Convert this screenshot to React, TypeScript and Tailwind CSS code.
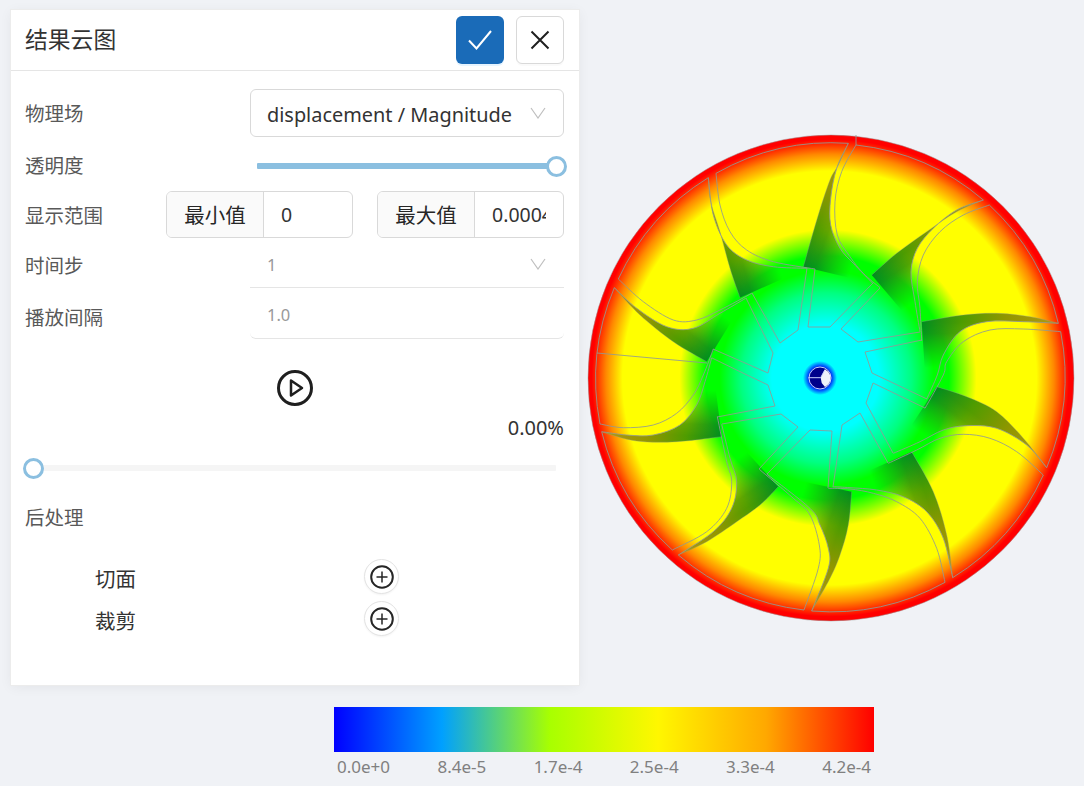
import React from "react";

type P = [number, number];
const OFF: Record<number, P> = { 1: [580, 125], 2: [830, 125], 3: [580, 375], 4: [830, 375] };
const q = (n: number, pts: P[]): P[] => pts.map(([x, y]) => [OFF[n][0] + x / 3, OFF[n][1] + y / 3]);

const curve = (pts: P[], move = true) => {
  let d = move ? `M${pts[0][0].toFixed(1)} ${pts[0][1].toFixed(1)}` : `L${pts[0][0].toFixed(1)} ${pts[0][1].toFixed(1)}`;
  for (let i = 0; i < pts.length - 1; i++) {
    const p0 = pts[Math.max(0, i - 1)], p1 = pts[i], p2 = pts[i + 1], p3 = pts[Math.min(pts.length - 1, i + 2)];
    const c1: P = [p1[0] + (p2[0] - p0[0]) / 6, p1[1] + (p2[1] - p0[1]) / 6];
    const c2: P = [p2[0] - (p3[0] - p1[0]) / 6, p2[1] - (p3[1] - p1[1]) / 6];
    d += `C${c1[0].toFixed(1)} ${c1[1].toFixed(1)} ${c2[0].toFixed(1)} ${c2[1].toFixed(1)} ${p2[0].toFixed(1)} ${p2[1].toFixed(1)}`;
  }
  return d;
};
const line = (pts: P[]) => "M" + pts.map((p) => `${p[0].toFixed(1)} ${p[1].toFixed(1)}`).join("L");

const blades: { lead: P[]; c1: P[]; c2: P[] }[] = [
  {
    lead: q(1, [[385, 158], [392, 230], [420, 320], [450, 430], [480, 518]]),
    c1: q(1, [[385, 158], [400, 270], [440, 360], [500, 405], [580, 425], [680, 430]]),
    c2: q(1, [[408, 145], [420, 240], [450, 320], [500, 375], [580, 410], [705, 432]]),
  },
  {
    lead: q(2, [[55, 55], [25, 120], [0, 165], [-35, 270], [-80, 425]]),
    c1: q(2, [[55, 55], [20, 130], [2, 220], [2, 300], [30, 370], [70, 415], [128, 475]]),
    c2: q(2, [[78, 60], [35, 140], [15, 230], [22, 330], [60, 395], [100, 445], [150, 488]]),
  },
  {
    lead: q(2, [[460, 225], [380, 260], [290, 320], [200, 385], [125, 450]]),
    c1: q(2, [[460, 225], [380, 255], [310, 310], [262, 370], [243, 440], [255, 530], [270, 620]]),
    c2: q(2, [[478, 240], [400, 270], [330, 320], [280, 390], [262, 470], [270, 550], [275, 647]]),
  },
  {
    lead: q(2, [[685, 595], [600, 575], [500, 565], [400, 570], [275, 590]]),
    c1: q(2, [[685, 595], [580, 590], [470, 590], [390, 620], [340, 690], [322, 750], [290, 822]]),
    c2: q(2, [[692, 620], [580, 612], [480, 615], [400, 650], [350, 710], [340, 750], [285, 850]]),
  },
  {
    lead: q(4, [[650, 278], [580, 190], [500, 110], [410, 65], [320, 35]]),
    c1: q(4, [[650, 278], [590, 210], [500, 160], [410, 152], [340, 165], [270, 200], [190, 235]]),
    c2: q(4, [[640, 300], [560, 230], [480, 190], [400, 178], [330, 190], [260, 225], [175, 265]]),
  },
  {
    lead: q(4, [[368, 608], [350, 480], [310, 350], [245, 230]]),
    c1: q(4, [[368, 608], [340, 490], [290, 410], [220, 365], [140, 345], [60, 338], [10, 335]]),
    c2: q(4, [[345, 622], [320, 520], [270, 430], [200, 380], [130, 355], [60, 342], [-5, 340]]),
  },
  {
    lead: q(4, [[-55, 708], [0, 610], [30, 540], [55, 450], [65, 350]]),
    c1: q(3, [[695, 708], [745, 580], [745, 520], [720, 450], [690, 400], [560, 297]]),
    c2: q(3, [[672, 705], [715, 580], [718, 510], [690, 420], [640, 370], [538, 283]]),
  },
  {
    lead: q(3, [[295, 540], [380, 500], [470, 440], [540, 390], [595, 335]]),
    c1: q(3, [[295, 540], [400, 470], [455, 400], [470, 320], [450, 250], [425, 148]]),
    c2: q(3, [[277, 525], [380, 470], [440, 400], [455, 320], [440, 260], [412, 125]]),
  },
  {
    lead: q(3, [[68, 172], [170, 198], [290, 200], [425, 185]]),
    c1: q(3, [[65, 170], [140, 180], [220, 180], [300, 150], [350, 90], [375, 20], [395, -52]]),
    c2: q(3, [[60, 147], [130, 158], [220, 150], [290, 115], [340, 60], [370, 0], [400, -78]]),
  },
  {
    lead: q(1, [[103, 488], [180, 570], [280, 650], [380, 710]]),
    c1: q(1, [[103, 488], [170, 550], [260, 605], [340, 610], [420, 565], [497, 520]]),
    c2: q(1, [[115, 462], [190, 530], [280, 585], [350, 585], [420, 555], [515, 505]]),
  },
];

const chains: P[][] = [
  [[746, 298], [773, 353], [768, 373], [713, 349]],
  [[712, 358], [747, 375], [768, 385], [775, 406], [717, 417]],
  [[722, 424], [781, 414], [798, 427], [759, 469]],
  [[767, 474], [810, 430], [832, 431], [828, 488]],
  [[833, 487], [842, 425], [860, 413], [888, 463]],
  [[893, 453], [866, 403], [873, 383], [925, 408]],
  [[927, 399], [872, 373], [865, 352], [922, 340]],
  [[920, 332], [858, 342], [841, 329], [880, 288]],
  [[873, 283], [830, 327], [808, 327], [815, 269]],
  [[807, 268], [798, 330], [780, 343], [752, 293]],
];

// Unit normal of the root->tip chord, pointing to the side the blade's back curve lies on.
const normalOf = (b: { lead: P[]; c1: P[] }): P => {
  const root = b.lead[b.lead.length - 1], tip = b.lead[0];
  const vx = tip[0] - root[0], vy = tip[1] - root[1];
  const len = Math.hypot(vx, vy);
  let nx = -vy / len, ny = vx / len;
  const mid = b.c1[Math.floor(b.c1.length / 2)];
  if ((mid[0] - root[0]) * nx + (mid[1] - root[1]) * ny < 0) {
    nx = -nx;
    ny = -ny;
  }
  return [nx, ny];
};

const Wheel = () => {
  const grey = "#909a94";
  return (
    <svg viewBox="580 0 504 686" className="ml-[1px] h-[686px] w-[504px] shrink-0">
      <defs>
        <radialGradient id="disk" gradientUnits="userSpaceOnUse" cx="830.5" cy="378" r="243.5" fx="824" fy="378">
          <stop offset="0" stopColor="#00ffff" />
          <stop offset="0.22" stopColor="#00ffff" />
          <stop offset="0.35" stopColor="#00ff80" />
          <stop offset="0.44" stopColor="#00ff00" />
          <stop offset="0.5" stopColor="#00ff00" />
          <stop offset="0.61" stopColor="#ffff00" />
          <stop offset="0.85" stopColor="#ffff00" />
          <stop offset="0.92" stopColor="#ff8800" />
          <stop offset="0.98" stopColor="#ff0000" />
          <stop offset="1" stopColor="#ff0000" />
        </radialGradient>
        <radialGradient id="hub" gradientUnits="userSpaceOnUse" cx="820" cy="378" r="17">
          <stop offset="0.55" stopColor="#0000c8" />
          <stop offset="0.75" stopColor="#0060ff" />
          <stop offset="1" stopColor="#00ffff" />
        </radialGradient>
        {blades.map((b, i) => {
          const root = b.lead[b.lead.length - 1];
          const tip = b.lead[0];
          const n = normalOf(b);
          return (
            <React.Fragment key={i}>
              <linearGradient id={`along${i}`} gradientUnits="userSpaceOnUse" x1={root[0]} y1={root[1]} x2={tip[0]} y2={tip[1]}>
                <stop offset="0" stopColor="#008c20" />
                <stop offset="0.3" stopColor="#4f9c00" />
                <stop offset="0.62" stopColor="#929600" />
                <stop offset="1" stopColor="#b09a10" />
              </linearGradient>
              <linearGradient
                id={`across${i}`}
                gradientUnits="userSpaceOnUse"
                x1={root[0]}
                y1={root[1]}
                x2={root[0] + n[0] * 46}
                y2={root[1] + n[1] * 46}
              >
                <stop offset="0" stopColor="#fff" />
                <stop offset="0.25" stopColor="#e6e6e6" />
                <stop offset="1" stopColor="#000" />
              </linearGradient>
              <mask id={`mask${i}`} maskUnits="userSpaceOnUse" x="580" y="120" width="504" height="510">
                <rect x="580" y="120" width="504" height="510" fill={`url(#across${i})`} />
              </mask>
            </React.Fragment>
          );
        })}
      </defs>
      <circle cx="831" cy="378" r="243" fill="url(#disk)" stroke="#9a9a9a" strokeWidth="0.5" />
      {blades.map((b, i) => {
        const d = curve(b.lead) + curve([...b.c1].reverse(), false) + "Z";
        return <path key={i} d={d} fill={`url(#along${i})`} mask={`url(#mask${i})`} />;
      })}
      <g fill="none" stroke={grey} strokeWidth="1" strokeOpacity="0.85">
        {blades.map((b, i) => {
          const next = blades[(i + 1) % blades.length];
          const a = b.c2[0], z = next.c1[0];
          return (
            <React.Fragment key={i}>
              <path d={curve(b.c1)} />
              <path d={curve(b.c2)} />
              <path d={curve(b.lead)} strokeOpacity="0.35" />
              <path d={`M${a[0]} ${a[1]}A235 235 0 0 1 ${z[0]} ${z[1]}`} />
            </React.Fragment>
          );
        })}
        {chains.map((c, i) => (
          <path key={i} d={line(c)} />
        ))}
        <path d="M597 353L707 363" />
        <path d="M856 135L856 145" />
      </g>
      <circle cx="820" cy="378" r="17" fill="url(#hub)" />
      <circle cx="820" cy="378" r="11" fill="#00008b" stroke="#c8d0ff" strokeWidth="1" />
      <path d="M825 369.5Q831 373 830.5 378Q831 383 825 387L821.7 383L820.7 377.7Z" fill="#eef0fa" />
      <path d="M808.5 377.7H820.7L825 369.5" fill="none" stroke="#c8d0ff" strokeWidth="1" />
    </svg>
  );
};

const Chevron = () => (
  <svg width="16" height="12" viewBox="0 0 16 12" fill="none" stroke="#bfbfbf" strokeWidth="1.2">
    <path d="M1 1L8 11L15 1" />
  </svg>
);

const Slider = ({ value, track }: { value: boolean; track: string }) => (
  <div className={`relative h-[6px] rounded-[1px] ${track}`}>
    <div
      className={`absolute top-[-7.5px] h-[21px] w-[21px] rounded-full border-[3px] border-[#8bbfe0] bg-white ${
        value ? "right-[-10px]" : "left-[-10px]"
      }`}
    />
  </div>
);

const Label = ({ children, className = "pt-[2px]" }: { children: React.ReactNode; className?: string }) => (
  <span className={`block text-[19.5px] leading-none text-[#595959] ${className}`}>{children}</span>
);

const Range = ({ name, value }: { name: string; value: string }) => (
  <div className="flex h-[47px] w-[187px] overflow-hidden rounded-[6px] border border-[#d9d9d9]">
    <div className="flex w-[97px] shrink-0 items-center justify-center border-r border-[#d9d9d9] bg-[#fafafa] pt-[1px] text-[20.5px] text-[#262626]">
      {name}
    </div>
    <div className="flex-1 overflow-hidden whitespace-nowrap pl-[17px] pr-[17px] text-[19.5px] leading-[45px] text-[#333]">
      <div className="overflow-hidden">{value}</div>
    </div>
  </div>
);

const PlusBtn = () => (
  <div className="flex h-[35px] w-[35px] items-center justify-center rounded-full border border-[#e3e3e3] bg-white shadow-[0_1px_2px_rgba(0,0,0,0.05)]">
    <svg width="24" height="24" viewBox="0 0 24 24" fill="none" stroke="#262626">
      <circle cx="12" cy="12" r="10.8" strokeWidth="2" />
      <path d="M12 6.5V17.5M6.5 12H17.5" strokeWidth="1.5" />
    </svg>
  </div>
);

export default function App() {
  return (
    <div className="h-[786px] w-[1084px] overflow-hidden bg-[#f0f2f6] font-['Noto_Sans','Noto_Sans_CJK_SC',sans-serif]">
      <div className="flex items-start">
        <div className="ml-[11px] mt-[10px] h-[675px] w-[568px] shrink-0 bg-white shadow-[0_0_0_1px_#ececec,0_2px_12px_rgba(0,0,0,0.06)]">
          <div className="flex h-[61px] items-center border-b border-[#e5e5e5] pl-[14px] pr-[15px]">
            <span className="flex-1 text-[22.8px] leading-none text-[#333]">结果云图</span>
            <div className="flex h-[48px] w-[48px] items-center justify-center rounded-[6px] bg-[#1a6bb8] shadow-[0_2px_0_rgba(5,145,255,0.1)]">
              <svg width="26" height="22" viewBox="0 0 26 22" fill="none" stroke="#fff" strokeWidth="2">
                <path d="M2 11.5L9.5 19.5L24 2" />
              </svg>
            </div>
            <div className="ml-[12px] flex h-[48px] w-[48px] items-center justify-center rounded-[6px] border border-[#d9d9d9] bg-white shadow-[0_2px_0_rgba(0,0,0,0.02)]">
              <svg width="20" height="20" viewBox="0 0 20 20" fill="none" stroke="#1f1f1f" strokeWidth="2">
                <path d="M1.5 1.5L18.5 18.5M18.5 1.5L1.5 18.5" />
              </svg>
            </div>
          </div>
          <div className="pl-[14px] pr-[15px]">
            <div className="mt-[18px] flex h-[48px] items-center">
              <div className="w-[225px] shrink-0"><Label>物理场</Label></div>
              <div className="flex h-[48px] flex-1 items-center justify-between rounded-[6px] border border-[#d9d9d9] pl-[16px] pr-[17px] text-[19.9px] text-[#333]">
                <span className="pt-[4px]">displacement / Magnitude</span>
                <Chevron />
              </div>
            </div>
            <div className="mt-[4px] flex h-[48px] items-center">
              <div className="w-[232px] shrink-0"><Label>透明度</Label></div>
              <div className="flex-1 pr-[7px] pt-[2px]">
                <Slider value track="bg-[#8bbfe0]" />
              </div>
            </div>
            <div className="mt-[2px] flex h-[47px] items-center">
              <div className="w-[141px] shrink-0"><Label>显示范围</Label></div>
              <div className="flex flex-1 justify-between">
                <Range name="最小值" value="0" />
                <Range name="最大值" value="0.0004" />
              </div>
            </div>
            <div className="mt-[2px] flex h-[48px] items-center">
              <div className="w-[225px] shrink-0"><Label className="pt-[4px]">时间步</Label></div>
              <div className="flex h-[48px] flex-1 items-center justify-between border-b border-[#e5e5e5] pl-[17px] pr-[18px] text-[16.5px] text-[#999]">
                <span className="pt-[4px]">1</span>
                <Chevron />
              </div>
            </div>
            <div className="mt-[3px] flex h-[48px] items-center">
              <div className="w-[225px] shrink-0"><Label className="pt-[6px]">播放间隔</Label></div>
              <div className="flex h-[48px] flex-1 items-center rounded-b-[6px] border-b border-[#e5e5e5] pl-[17px] text-[16.5px] text-[#999]">
                <span className="pt-[2px]">1.0</span>
              </div>
            </div>
            <div className="mt-[31px] flex justify-center">
              <svg width="36" height="36" viewBox="0 0 36 36" fill="none" stroke="#1f1f1f" strokeWidth="3">
                <circle cx="18" cy="18" r="16.5" />
                <path d="M14 10.5L25 18L14 25.5Z" strokeWidth="2.5" strokeLinejoin="round" />
              </svg>
            </div>
            <div className="mt-[10px] h-[24px] text-right text-[20px] leading-[24px] text-[#333]">0.00%</div>
            <div className="mt-[25px] pl-[8px] pr-[8px]">
              <Slider value={false} track="bg-[#f5f5f5]" />
            </div>
            <div className="mt-[33px] h-[26px]"><Label className="pt-[4px]">后处理</Label></div>
            <div className="mt-[29px] flex h-[35px] items-start pl-[70px]">
              <span className="w-[269px] pt-[7px] text-[20.5px] leading-[26px] text-[#333]">切面</span>
              <PlusBtn />
            </div>
            <div className="mt-[7px] flex h-[35px] items-start pl-[70px]">
              <span className="w-[269px] pt-[7px] text-[20.5px] leading-[26px] text-[#333]">裁剪</span>
              <PlusBtn />
            </div>
          </div>
        </div>
        <Wheel />
      </div>
      <div className="ml-[334px] mt-[21px] w-[540px]">
        <div className="h-[45px] bg-[linear-gradient(90deg,#0000ff_0%,#00a0ff_20%,#a8ff00_40%,#fff700_60%,#ffa800_80%,#ff0000_100%)]" />
        <div className="mt-[3px] flex justify-between px-[3px] text-[17px] leading-[24px] text-[#808080]">
          <span>0.0e+0</span>
          <span>8.4e-5</span>
          <span>1.7e-4</span>
          <span>2.5e-4</span>
          <span>3.3e-4</span>
          <span>4.2e-4</span>
        </div>
      </div>
    </div>
  );
}
